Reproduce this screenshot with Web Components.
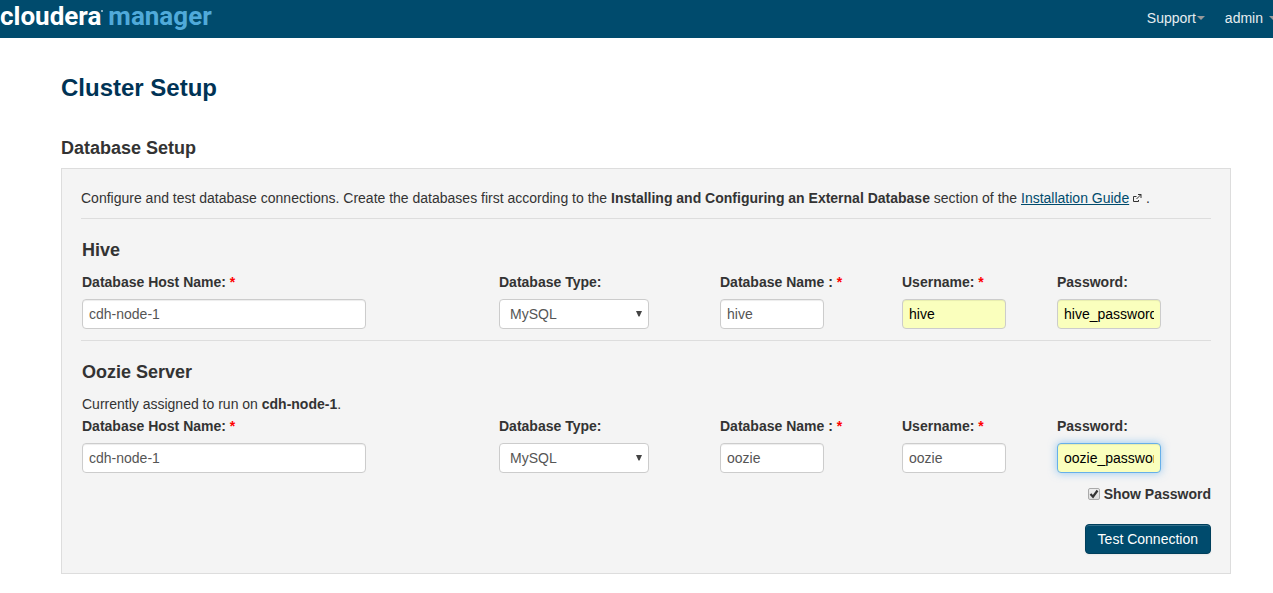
<!DOCTYPE html>
<html lang="en">
<head>
<meta charset="utf-8">
<title>Cluster Setup - Cloudera Manager</title>
<style>
body { margin: 0; background: #fff; color: #333; font: 14px/20px "Liberation Sans", Arial, sans-serif; }
</style>
</head>
<body>
<cm-header></cm-header>
<cm-page heading="Cluster Setup">
  <cm-panel heading="Database Setup">
    <span slot="intro">Configure and test database connections. Create the databases first according to the <b>Installing and Configuring an External Database</b> section of the <cm-external-link href="#guide">Installation Guide</cm-external-link> .</span>
    <cm-service heading="Hive">
      <cm-field label="Database Host Name:" name="host" value="cdh-node-1" wide required></cm-field>
      <cm-select label="Database Type:" name="type" value="MySQL"></cm-select>
      <cm-field label="Database Name :" name="database" value="hive" required></cm-field>
      <cm-field label="Username:" name="user" value="hive" required filled></cm-field>
      <cm-field label="Password:" name="password" value="hive_password" filled></cm-field>
    </cm-service>
    <cm-service heading="Oozie Server">
      <p slot="note" style="margin:0 0 2px">Currently assigned to run on <b>cdh-node-1</b>.</p>
      <cm-field label="Database Host Name:" name="host" value="cdh-node-1" wide required></cm-field>
      <cm-select label="Database Type:" name="type" value="MySQL"></cm-select>
      <cm-field label="Database Name :" name="database" value="oozie" required></cm-field>
      <cm-field label="Username:" name="user" value="oozie" required></cm-field>
      <cm-field label="Password:" name="password" value="oozie_password" filled active></cm-field>
    </cm-service>
    <cm-actions slot="actions"></cm-actions>
  </cm-panel>
</cm-page>

<script>
class Base extends HTMLElement {
  connectedCallback() {
    if (this.shadowRoot) return;
    this.attachShadow({ mode: "open" }).innerHTML = this.render();
  }
  attr(name) { return this.getAttribute(name) || ""; }
}

customElements.define("cm-header", class extends Base {
  render() {
    return `<style>
      :host { display: block; overflow: hidden; background: #004b6d; }
      header { display: flex; justify-content: space-between; align-items: flex-start; height: 38px; }
      .logo { display: flex; gap: 5px; color: #fff; text-decoration: none; font: 700 26px/32px Roboto, sans-serif; }
      .product { color: #50aada; }
      .brand { display: flex; }
      .mark { width: 2px; height: 2px; margin-top: 10px; border-radius: 50%; background: #b8cdd8; }
      nav { display: flex; gap: 20px; padding-top: 8px; margin-right: -4px; }
      button { display: flex; align-items: center; gap: 1px; padding: 0; border: 0; background: none; color: #e6edf0; font: inherit; cursor: pointer; }
      button.user { gap: 6px; }
      i { border: 4px solid transparent; border-top-color: #999; border-bottom: 0; }
    </style>
    <header>
      <a class="logo" href="#home"><span class="brand">cloudera<span class="mark"></span></span><span class="product">manager</span></a>
      <nav><button type="button">Support<i></i></button><button type="button" class="user">admin<i></i></button></nav>
    </header>`;
  }
});

customElements.define("cm-page", class extends Base {
  render() {
    return `<style>
      :host { display: block; padding: 30px 42px 19px 61px; }
      h1 { margin: 0 0 30px; color: #003355; font-size: 24px; line-height: 40px; }
    </style>
    <main><h1>${this.attr("heading")}</h1><slot></slot></main>`;
  }
});

customElements.define("cm-panel", class extends Base {
  render() {
    return `<style>
      :host { display: block; }
      h2 { margin: 0 0 10px; font-size: 18px; line-height: 20px; }
      form { padding: 19px; border: 1px solid #ddd; background: #f4f4f4; }
      p { margin: 0 0 10px; }
    </style>
    <h2>${this.attr("heading")}</h2>
    <form><p><slot name="intro"></slot></p><slot></slot><slot name="actions"></slot></form>`;
  }
});

customElements.define("cm-external-link", class extends Base {
  render() {
    return `<style>
      :host { display: inline; }
      a { color: #004b6d; text-decoration: underline; }
      svg { width: 9px; height: 9px; margin: 0 0 0 4px; }
    </style><a href="${this.attr("href")}"><slot></slot></a><svg viewBox="0 0 9 9" fill="none" stroke="#333" aria-hidden="true"><path d="M3.500 2.500h-3v5h5V6M5 .5h3V4M8 .5 3.500 5"/></svg>`;
  }
});

customElements.define("cm-service", class extends Base {
  render() {
    return `<style>
      :host { display: block; padding: 21px 1px 11px; border-top: 1px solid #ddd; }
      h3 { margin: 0 0 12px; font-size: 18px; line-height: 20px; }
      .fields { display: grid; grid-template-columns: 417fr 221fr 182fr 155fr 153fr; }
    </style>
    <h3>${this.attr("heading")}</h3><slot name="note"></slot>
    <div class="fields"><slot></slot></div>`;
  }
});

const controlStyle = `
  :host { display: block; min-width: 0; }
  label { display: block; margin-bottom: 7px; font-weight: 700; }
  input, select { display: block; box-sizing: border-box; height: 30px; margin: 0; border: 1px solid #ccc; border-radius: 4px; background: #fff; color: #555; font: inherit; outline: 0; }`;

customElements.define("cm-field", class extends Base {
  render() {
    const star = this.hasAttribute("required") ? ` <span>*</span>` : "";
    return `<style>${controlStyle}
      span { color: #f00; }
      input { width: 104px; padding: 4px 6px; box-shadow: inset 0 1px 1px rgba(0,0,0,.075); }
      :host([wide]) input { width: 284px; }
      :host([filled]) input { background: #faffbd; color: #000; }
      :host([active]) input { border-color: #66afe9; box-shadow: inset 0 1px 1px rgba(0,0,0,.075), 0 0 8px rgba(82,168,236,.6); }
    </style>
    <label for="control">${this.attr("label")}${star}</label>
    <input id="control" type="text" name="${this.attr("name")}" value="${this.attr("value")}">`;
  }
});

customElements.define("cm-select", class extends Base {
  render() {
    return `<style>${controlStyle}
      .box { display: grid; width: 150px; align-items: center; }
      select, svg { grid-area: 1 / 1; }
      select { appearance: none; width: 100%; padding: 0 10px; }
      svg { justify-self: end; width: 6px; height: 6px; margin-right: 7px; pointer-events: none; }
    </style>
    <label for="control">${this.attr("label")}</label>
    <div class="box"><select id="control" name="${this.attr("name")}"><option>${this.attr("value")}</option></select>
    <svg viewBox="0 0 6 6" fill="#444" aria-hidden="true"><path d="M0 0h6L3.500 5.500h-1z"/></svg></div>`;
  }
});

customElements.define("cm-actions", class extends Base {
  render() {
    return `<style>
      :host { display: flex; flex-direction: column; align-items: flex-end; gap: 20px; }
      label { display: flex; align-items: center; gap: 4px; font-weight: 700; }
      .tick { display: grid; }
      input, svg { grid-area: 1 / 1; width: 12px; height: 12px; }
      input { appearance: none; box-sizing: border-box; margin: 0; border: 1px solid #aaa; border-radius: 2px; background: linear-gradient(#eee, #ddd); }
      svg { z-index: 1; pointer-events: none; visibility: hidden; }
      input:checked + svg { visibility: visible; }
      button { height: 30px; padding: 4px 12px; border: 1px solid #003f5c; border-radius: 4px; background: #004b6d; box-shadow: inset 0 1px 0 rgba(255,255,255,.2), 0 1px 2px rgba(0,0,0,.05); color: #fff; font: inherit; cursor: pointer; }
    </style>
    <label for="show"><span class="tick"><input id="show" type="checkbox" checked><svg viewBox="0 0 12 12" fill="none" stroke="#333" stroke-width="2.200" aria-hidden="true"><path d="M2.500 6 5 8.700 9.500 2.500"/></svg></span>Show Password</label>
    <button type="button">Test Connection</button>`;
  }
});
</script>
</body>
</html>
